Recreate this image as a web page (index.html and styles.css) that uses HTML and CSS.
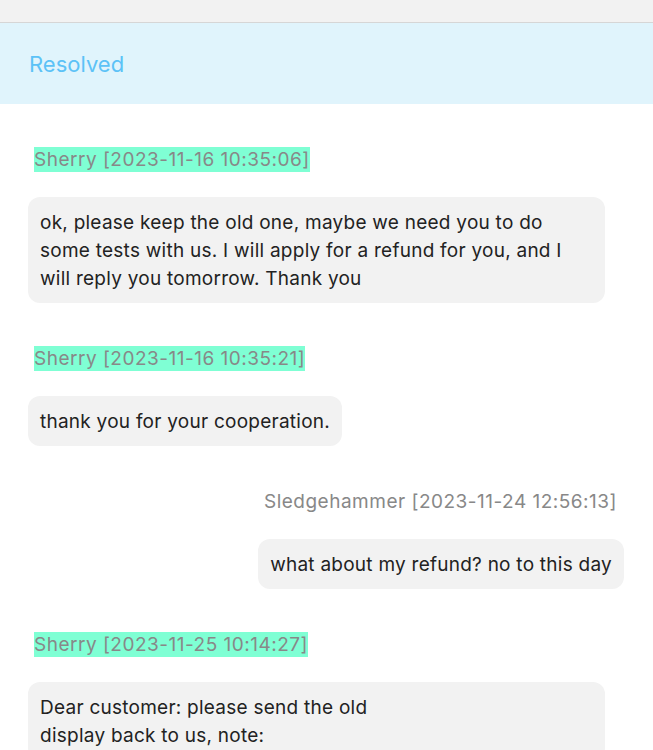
FILE: index.html
```html
<!DOCTYPE html>
<html lang="en">
<head>
<meta charset="utf-8">
<title>Chat</title>
<link rel="stylesheet" href="styles.css">
</head>
<body>
<div class="topbar"></div>
<div class="banner"><span class="banner-text">Resolved</span></div>
<div class="chat">
  <div class="msg">
    <div class="label hl">Sherry [2023-11-16 10:35:06]</div>
    <div class="bubble wide">ok, please keep the old one, maybe we need you to do some tests with us. I will apply for a refund for you, and I will reply you tomorrow. Thank you</div>
  </div>
  <div class="msg">
    <div class="label hl">Sherry [2023-11-16 10:35:21]</div>
    <div class="bubble">thank you for your cooperation.</div>
  </div>
  <div class="msg mine">
    <div class="label">Sledgehammer [2023-11-24 12:56:13]</div>
    <div class="bubble">what about my refund? no to this day</div>
  </div>
  <div class="msg">
    <div class="label hl">Sherry [2023-11-25 10:14:27]</div>
    <div class="bubble wide">Dear customer: please send the old<br>display back to us, note:</div>
  </div>
</div>
</body>
</html>
```
FILE: styles.css
```css
html, body {
  margin: 0;
  padding: 0;
  background: #ffffff;
  overflow: hidden;
}
body {
  width: 653px;
  height: 750px;
  font-family: Inter, "Noto Sans", sans-serif;
  color: #222222;
}
.topbar {
  height: 22px;
  background: #f2f2f2;
  border-bottom: 1px solid #d6d6d6;
}
.banner {
  height: 81px;
  background: #e0f4fc;
  display: flex;
  align-items: center;
  padding-left: 29px;
}
.banner-text {
  font-size: 22px;
  color: #5cc2f7;
}
.chat {
  display: flex;
  flex-direction: column;
  gap: 43px;
  padding: 43px 29px 0 28px;
}
.msg {
  display: flex;
  flex-direction: column;
  align-items: flex-start;
  gap: 25px;
}
.label {
  margin-left: 6px;
  font-size: 19px;
  line-height: 25px;
  letter-spacing: 0.5px;
  color: #888888;
}
.hl {
  background: #7fffd4;
}
.bubble {
  background: #f2f2f2;
  border-radius: 12px;
  padding: 12px 12px 10px;
  font-size: 19px;
  line-height: 28px;
  letter-spacing: 0.25px;
  max-width: 553px;
}
.bubble.wide {
  width: 553px;
}
.mine {
  align-items: flex-end;
}
.mine .label {
  margin-left: 0;
  margin-right: 7px;
}
```
